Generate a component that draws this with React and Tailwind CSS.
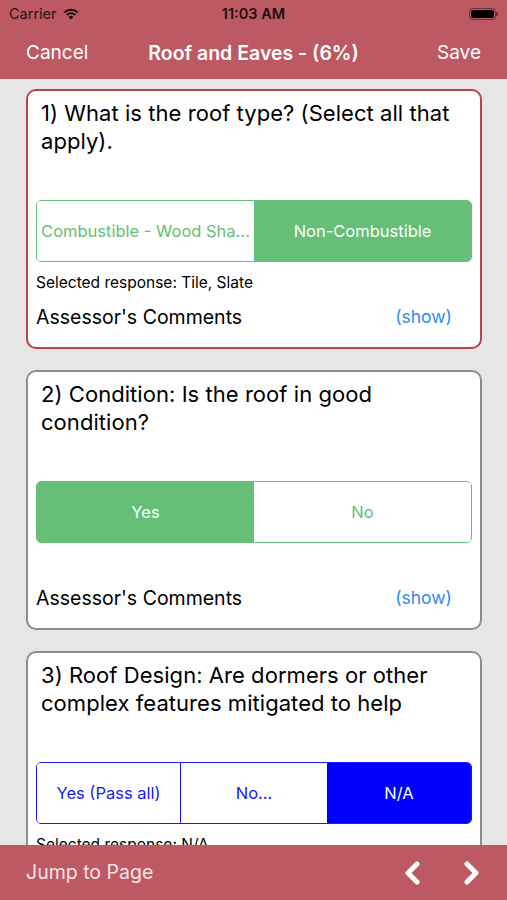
import React from "react";

const font = { fontFamily: 'Inter, "Liberation Sans", Arial, sans-serif' };

function Card({ border, question, segment, selected }) {
  return (
    <div className={`h-[260px] shrink-0 rounded-[10px] border-2 ${border} bg-white flex flex-col`}>
      <div className="h-[109px] shrink-0 pt-[8px] pl-[13px] pr-[4px] overflow-hidden">
        <div className="text-[22px] leading-[28px] text-black tracking-[0.05px]">{question}</div>
      </div>
      <div className="px-[8px]">{segment}</div>
      <div className="mt-[11px] h-[20px] pl-[8px] text-[15.5px] leading-[20px] text-black">{selected}</div>
      <div className="mt-[12px] h-[24px] pl-[8px] pr-[28px] flex items-center justify-between">
        <span className="text-[19.5px] leading-[24px] text-black">Assessor's Comments</span>
        <span className="text-[17.5px] leading-[24px] text-[#2f8af3]">(show)</span>
      </div>
    </div>
  );
}

function GreenSeg({ leftLabel, rightLabel, leftOn }) {
  return (
    <div className="h-[62px] flex rounded-[5px] border border-[#65bf76] overflow-hidden text-[16.5px]">
      <div className={`flex-1 min-w-0 flex items-center justify-center whitespace-nowrap ${leftOn ? "bg-[#65bf76] text-white" : "bg-white text-[#65bf76]"}`}>{leftLabel}</div>
      <div className={`flex-1 min-w-0 flex items-center justify-center whitespace-nowrap ${leftOn ? "bg-white text-[#65bf76]" : "bg-[#65bf76] text-white"}`}>{rightLabel}</div>
    </div>
  );
}

function BlueSeg() {
  return (
    <div className="h-[62px] flex rounded-[5px] border border-[#1a1aff] overflow-hidden text-[16.5px]">
      <div className="w-[144px] flex items-center justify-center bg-white text-[#1a1ae6] border-r border-[#1a1aff]">Yes (Pass all)</div>
      <div className="w-[146px] flex items-center justify-center bg-white text-[#1a1ae6]">No...</div>
      <div className="flex-1 flex items-center justify-center bg-[#0000ff] text-white">N/A</div>
    </div>
  );
}

export default function App() {
  return (
    <div className="w-[507px] h-[900px] flex flex-col bg-[#e6e6e6] overflow-hidden" style={font}>
      <div className="h-[79px] shrink-0 bg-[#bd5962] flex flex-col">
        <div className="h-[28px] flex items-center justify-between px-[9px] relative">
          <div className="flex items-center gap-[6px] text-[14.5px] text-[#2a1416]">
            <span>Carrier</span>
            <svg width="16" height="12" viewBox="0 0 16 12">
              <path d="M8 11.5 L5.6 8.9 A3.4 3.4 0 0 1 10.4 8.9 Z" fill="#1c0c0e" />
              <path d="M3.7 7 A6.2 6.2 0 0 1 12.3 7" stroke="#1c0c0e" strokeWidth="1.9" fill="none" />
              <path d="M1.3 4.5 A9.6 9.6 0 0 1 14.7 4.5" stroke="#1c0c0e" strokeWidth="1.9" fill="none" />
            </svg>
          </div>
          <div className="absolute left-0 right-0 text-center text-[14.5px] font-semibold text-[#1c0c0e] pointer-events-none">11:03 AM</div>
          <div className="flex items-center">
            <div className="w-[27px] h-[12px] rounded-[3px] border border-[#7a2c33] p-[1px]">
              <div className="w-full h-full rounded-[2px] bg-black"></div>
            </div>
            <div className="w-[2px] h-[4px] bg-[#7a2c33] rounded-r-[1px]"></div>
          </div>
        </div>
        <div className="flex-1 flex items-center justify-between px-[26px] relative text-white">
          <span className="text-[19px]">Cancel</span>
          <span className="absolute left-0 right-0 text-center text-[19.5px] font-semibold pointer-events-none">Roof and Eaves - (6%)</span>
          <span className="text-[19px]">Save</span>
        </div>
      </div>

      <div className="flex-1 overflow-hidden pt-[10px] pl-[26px] pr-[25px] flex flex-col gap-[21px]">
        <Card
          border="border-[#b8434c]"
          question={<>1) What is the roof type? (Select all that<br />apply).</>}
          segment={<GreenSeg leftLabel="Combustible - Wood Sha..." rightLabel="Non-Combustible" leftOn={false} />}
          selected="Selected response: Tile, Slate"
        />
        <Card
          border="border-[#8c8c8c]"
          question={<>2) Condition: Is the roof in good<br />condition?</>}
          segment={<GreenSeg leftLabel="Yes" rightLabel="No" leftOn={true} />}
          selected=""
        />
        <Card
          border="border-[#8c8c8c]"
          question={<>3) Roof Design: Are dormers or other<br />complex features mitigated to help</>}
          segment={<BlueSeg />}
          selected="Selected response: N/A"
        />
      </div>

      <div className="h-[55px] shrink-0 bg-[#bd5962] flex items-center justify-between pl-[26px] pr-[25px]">
        <span className="text-[19.5px] text-[#f6e4e6]">Jump to Page</span>
        <div className="flex items-center gap-[40px]">
          <svg width="20" height="24" viewBox="0 0 20 24">
            <polyline points="15,3 6,12 15,21" fill="none" stroke="white" strokeWidth="5" strokeLinejoin="round" strokeLinecap="round" />
          </svg>
          <svg width="20" height="24" viewBox="0 0 20 24">
            <polyline points="5,3 14,12 5,21" fill="none" stroke="white" strokeWidth="5" strokeLinejoin="round" strokeLinecap="round" />
          </svg>
        </div>
      </div>
    </div>
  );
}
